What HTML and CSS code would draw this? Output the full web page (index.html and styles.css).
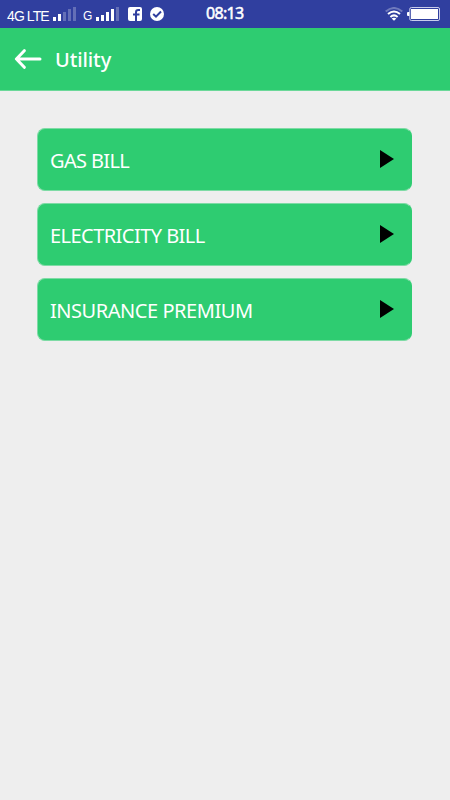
FILE: index.html
```html
<!DOCTYPE html>
<html lang="en">
<head>
  <meta charset="UTF-8">
  <meta name="viewport" content="width=device-width, initial-scale=1.0">
  <title>Utility</title>
  <link rel="stylesheet" href="styles.css">
</head>
<body>
  <div class="status-bar">
    <div class="status-left">
      <span class="network">4G LTE</span>
      <svg class="signal" width="24" height="14" viewBox="0 0 24 14" fill="#fff">
        <rect x="0" y="10" width="3" height="4"/>
        <rect x="5" y="7" width="3" height="7"/>
        <g opacity="0.25">
          <rect x="10" y="5" width="3" height="9"/>
          <rect x="15" y="2" width="3" height="12"/>
          <rect x="20" y="0" width="3" height="14"/>
        </g>
      </svg>
      <span class="network small">G</span>
      <svg class="signal" width="24" height="14" viewBox="0 0 24 14" fill="#fff">
        <rect x="0" y="10" width="3" height="4"/>
        <rect x="5" y="8" width="3" height="6"/>
        <rect x="10" y="5" width="3" height="9"/>
        <rect x="15" y="2" width="3" height="12"/>
        <rect x="20" y="0" width="3" height="14" opacity="0.25"/>
      </svg>
      <svg class="facebook" width="14" height="14" viewBox="0 0 14 14">
        <rect width="14" height="14" rx="2" fill="#fff"/>
        <path d="M8 14V5.2Q8 3 10.2 3H12M5 7.5H11.5" fill="none" stroke="#303f9f" stroke-width="2"/>
      </svg>
      <svg class="check" width="14" height="14" viewBox="0 0 14 14">
        <circle cx="7" cy="7" r="7" fill="#fff"/>
        <path d="M3.2 7L6 9.7L11 4.5" fill="none" stroke="#303f9f" stroke-width="2"/>
      </svg>
    </div>
    <span class="clock">08:13</span>
    <div class="status-right">
      <svg class="wifi" width="18" height="14" viewBox="0 0 18 14" fill="none" stroke="#fff" stroke-width="2">
        <path d="M0.7 4.6Q9 -2.6 17.3 4.6" opacity="0.3"/>
        <path d="M3 7.1Q9 1.9 15 7.1"/>
        <path d="M5.4 9.9Q9 6.9 12.6 9.9"/>
        <path d="M9 13.8L6.6 11.6Q9 9.8 11.4 11.6Z" fill="#fff" stroke="none"/>
      </svg>
      <svg class="battery" width="34" height="14" viewBox="0 0 34 14">
        <path d="M2.5 5H1Q0 5 0 6V8Q0 9 1 9H2.5Z" fill="#fff"/>
        <rect x="2.8" y="0.5" width="29.7" height="13" rx="1.5" fill="none" stroke="#c9cdeb"/>
        <rect x="4" y="2" width="27" height="10" fill="#fff"/>
      </svg>
    </div>
  </div>

  <div class="header">
    <svg class="back" width="28" height="20" viewBox="0 0 28 20" fill="none" stroke="#fff" stroke-width="3" stroke-linecap="round" stroke-linejoin="round">
      <path d="M26 10H2.6M10.3 1.7L2.4 10L10.3 18.3"/>
    </svg>
    <h1>Utility</h1>
  </div>

  <div class="menu">
    <div class="menu-item">
      <span class="gas">GAS BILL</span>
      <div class="arrow"></div>
    </div>
    <div class="menu-item">
      <span class="electricity">ELECTRICITY BILL</span>
      <div class="arrow"></div>
    </div>
    <div class="menu-item">
      <span class="insurance">INSURANCE PREMIUM</span>
      <div class="arrow"></div>
    </div>
  </div>
</body>
</html>
```

FILE: styles.css
```css
body {
  margin: 0;
  min-height: 100vh;
  background-color: #eeeeee;
  color: white;
  font-family: "Noto Sans", sans-serif;
}

svg {
  display: block;
  flex-shrink: 0;
}

.status-bar {
  display: grid;
  grid-template-columns: 206px 1fr auto;
  height: 28px;
  background-color: #303f9f;
}

.status-left {
  display: flex;
  padding-left: 7px;
}

.network {
  width: 46px;
  font-family: "Liberation Sans", Arial, sans-serif;
  font-size: 14px;
  line-height: 32px;
  letter-spacing: -0.9px;
  white-space: nowrap;
}

.network.small {
  width: 13px;
  margin-left: 6px;
  font-size: 12px;
}

.signal {
  margin-top: 7px;
}

.facebook {
  margin: 7px 0 0 8px;
}

.check {
  margin: 7px 0 0 8px;
}

.clock {
  font-size: 16px;
  line-height: 27px;
  letter-spacing: -0.7px;
  -webkit-text-stroke: 0.5px white;
}

.status-right {
  display: flex;
  padding: 7px 9px 0 0;
  gap: 4px;
}

.header {
  display: flex;
  align-items: center;
  box-sizing: border-box;
  height: 63px;
  padding-left: 14px;
  background-color: #2ecc71;
  border-bottom: 1px solid #6bd899;
}

h1 {
  margin: 2px 0 0 13px;
  font-size: 20px;
  font-weight: 500;
  line-height: 28px;
  letter-spacing: -0.1px;
}

.menu {
  display: flex;
  flex-direction: column;
  gap: 12px;
  padding: 37px 38px 0 37px;
}

.menu-item {
  display: flex;
  align-items: center;
  justify-content: space-between;
  box-sizing: border-box;
  height: 63px;
  padding: 0 17px 0 12px;
  border: 1px solid #7edba5;
  border-right-color: #2ecc71;
  border-radius: 8px;
  background-color: #2ecc71;
  font-size: 20px;
  line-height: 28px;
}

.menu-item span {
  padding-top: 3px;
}

.gas {
  letter-spacing: -0.65px;
}

.electricity {
  letter-spacing: -0.55px;
}

.insurance {
  letter-spacing: -0.45px;
}

.arrow {
  margin-bottom: 1px;
  border-left: 14px solid black;
  border-top: 9px solid transparent;
  border-bottom: 9px solid transparent;
}
```
